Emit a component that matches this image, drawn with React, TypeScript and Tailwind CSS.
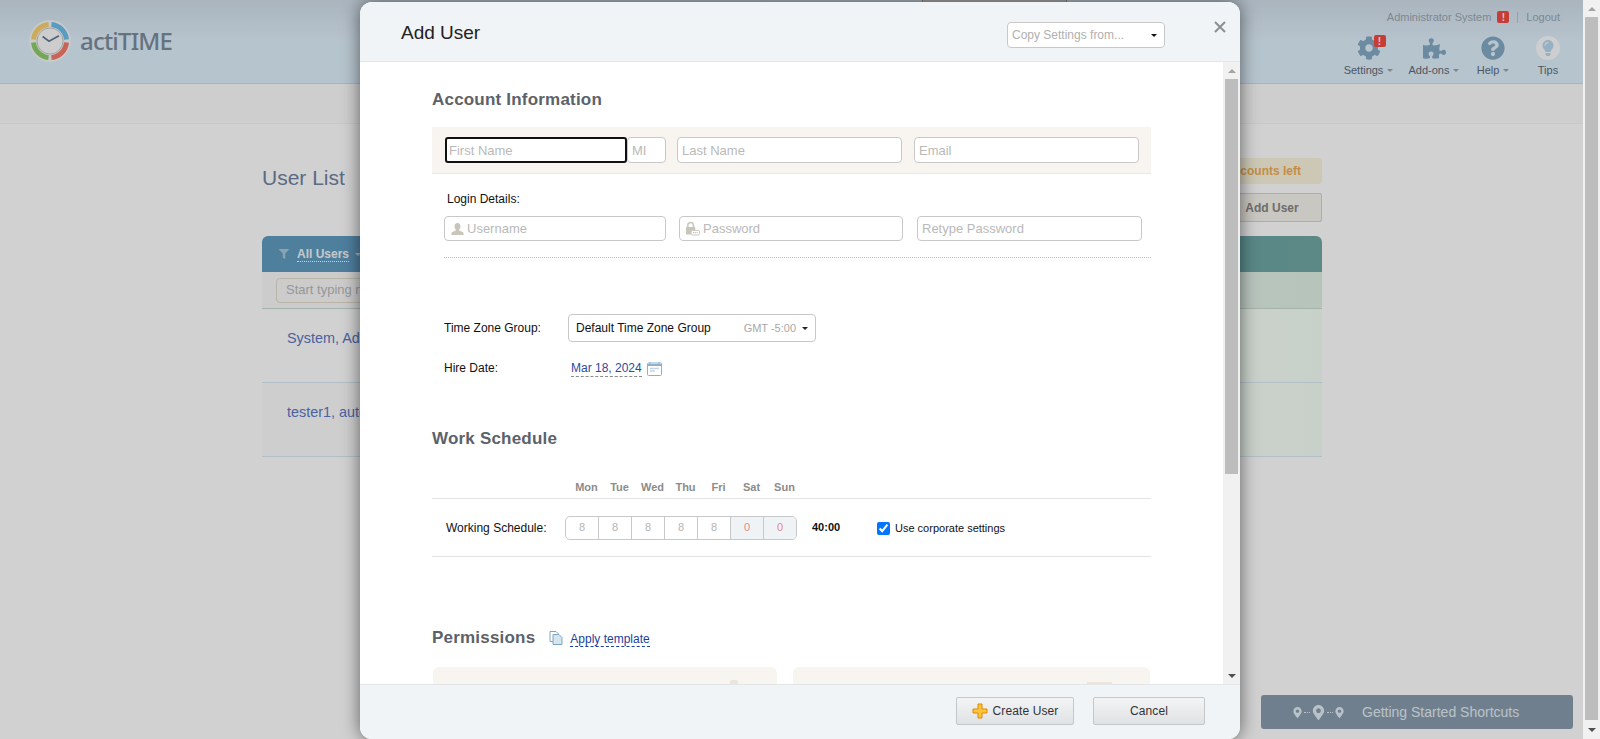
import { useState } from 'react'
import { FaCog, FaPuzzlePiece, FaQuestionCircle, FaLightbulb, FaFilter, FaMapMarkerAlt } from 'react-icons/fa'

const days = ['Mon', 'Tue', 'Wed', 'Thu', 'Fri', 'Sat', 'Sun']
const hours = ['8', '8', '8', '8', '8', '0', '0']

const navItems = [
  { label: 'Settings', width: 'w-[63px]', caret: true },
  { label: 'Add-ons', width: 'w-[68px]', caret: true },
  { label: 'Help', width: 'w-[50px]', caret: true },
  { label: 'Tips', width: 'w-[60px]', caret: false },
]

function Caret({ className }: { className: string }) {
  return <span className={`inline-block h-0 w-0 border-x-[3px] border-t-[3px] border-x-transparent ${className}`} />
}

function ArrowUp() {
  return <span className="h-0 w-0 border-x-[4px] border-b-[4px] border-x-transparent border-b-[#a3a3a3]" />
}

function ArrowDown() {
  return <span className="h-0 w-0 border-x-[4px] border-t-[4px] border-x-transparent border-t-[#505050]" />
}

function Logo() {
  return (
    <svg width="42" height="42" viewBox="0 0 42 42" fill="none">
      <circle cx="21" cy="21" r="21" fill="#f4f6f8" />
      <g strokeWidth="5">
        <path d="M22.44 4.6A16.5 16.5 0 0 1 37.44 19.56" stroke="#6cc0ec" />
        <path d="M37.44 22.44A16.5 16.5 0 0 1 22.44 37.44" stroke="#f47a6c" />
        <path d="M19.56 37.44A16.5 16.5 0 0 1 4.56 22.44" stroke="#8cce6c" />
        <path d="M4.56 19.56A16.5 16.5 0 0 1 19.56 4.56" stroke="#f8d272" />
      </g>
      <circle cx="21" cy="21" r="13" fill="#fbfbfb" stroke="#c9c9c9" />
      <path d="M13.6 16.6L20 21.3L30 15.7" stroke="#667a96" strokeWidth="1.8" />
    </svg>
  )
}

function UserIcon() {
  return (
    <svg className="ml-[6px] shrink-0" width="13" height="12" viewBox="0 0 13 12" fill="#c9c5ba">
      <path d="M6.5 0C8.4 0 9.5 1.4 9.5 3.2 9.5 5 8.6 6 8.2 6.6 8 7.3 8.4 7.8 9.2 8.1 11 8.7 12.6 9.3 12.6 10.5V12H.4V10.5C.4 9.3 2 8.7 3.8 8.1 4.6 7.8 5 7.3 4.8 6.6 4.4 6 3.5 5 3.5 3.2 3.5 1.4 4.6 0 6.5 0z" />
    </svg>
  )
}

function LockIcon() {
  return (
    <svg className="ml-[5px] shrink-0" width="15" height="15" viewBox="0 0 16 15" fill="none">
      <path d="M3 6V4a3 3 0 0 1 6 0v2" stroke="#c9c5ba" strokeWidth="1.6" />
      <rect x="1" y="6" width="10" height="8" rx="1" fill="#c9c5ba" />
      <rect x="6.5" y="9.5" width="9" height="5" rx="1.5" fill="#fff" stroke="#c9c5ba" />
      <path d="M8.5 12h1M10.5 12h1M12.5 12h1" stroke="#9c9c9c" />
    </svg>
  )
}

function TopBar() {
  return (
    <div className="relative flex h-[84px] justify-between border-b border-[#cddcea] bg-gradient-to-b from-[#d0dde8] via-[#dfeffb] to-[#e0f0fd]">
      <div className="absolute left-[922px] top-0 h-[8px] w-[145px] border-x border-[#9b9b9b] bg-[#c8c8c8]" />
      <div className="flex items-center pb-[1px] pl-[29px]">
        <Logo />
        <span className="ml-[9px] font-['Noto_Sans',sans-serif] text-[24px] font-medium leading-none tracking-[-0.8px] text-[#7c8c9c]">actiTIME</span>
      </div>
      <div className="flex flex-col items-end pr-[5px] pt-[10px]">
        <div className="flex h-[14px] items-center pr-[18px] text-[11px] text-[#9aa6b3]">
          <span>Administrator System</span>
          <span className="ml-[6px] flex h-[12px] w-[12px] items-center justify-center rounded-[2px] bg-[#f54a43] text-[10px] font-bold text-white">!</span>
          <span className="mx-[8px] h-[11px] w-px bg-[#b7c4d0]" />
          <span>Logout</span>
        </div>
        <div className="mt-[11px] flex">
          {navItems.map((item) => (
            <div key={item.label} className={`flex flex-col items-center ${item.width}`}>
              <div className="relative flex h-[26px] w-[26px] items-center justify-center">
                {item.label === 'Settings' && (
                  <>
                    <FaCog className="text-[24px] text-[#84a9c4]" />
                    <span className="absolute right-[-4px] top-[0px] flex h-[12px] w-[12px] items-center justify-center rounded-[2px] bg-[#f54a43] text-[10px] font-bold text-white">!</span>
                  </>
                )}
                {item.label === 'Add-ons' && <FaPuzzlePiece className="text-[23px] text-[#84a9c4]" />}
                {item.label === 'Help' && <FaQuestionCircle className="text-[24px] text-[#84a9c4]" />}
                {item.label === 'Tips' && (
                  <span className="flex h-[24px] w-[24px] items-center justify-center rounded-full bg-[#fafcfd]">
                    <FaLightbulb className="text-[16px] text-[#b8d8ee]" />
                  </span>
                )}
              </div>
              <div className="mt-[2px] flex h-[14px] items-center gap-[4px] text-[11px] text-[#5d6a78]">
                {item.label}
                {item.caret && <Caret className="border-t-[#97a4b0]" />}
              </div>
            </div>
          ))}
        </div>
      </div>
    </div>
  )
}

function UserListPage() {
  return (
    <div className="h-[739px] bg-white">
      <TopBar />
      <div className="h-[40px] border-b border-[#f5f5f5] bg-[#fcfcfc]" />
      <div className="pl-[262px] pr-[261px]">
        <div className="flex h-[112px] justify-between">
          <div className="pt-[42px] text-[21px] leading-[24px] text-[#6f83a1]">User List</div>
          <div className="flex flex-col items-end pt-[34px]">
            <div className="flex h-[26px] items-center rounded-[4px] bg-[#fbf5df] pl-[16px] pr-[21px] text-[12px] font-bold text-[#f0ad52]">5 accounts left</div>
            <div className="mt-[9px] flex h-[29px] w-[122px] items-center justify-center rounded-[2px] border border-[#d6d4c8] bg-[#f4f3ed] pl-[22px] text-[12px] font-bold text-[#8a8580]">Add User</div>
          </div>
        </div>
        <div className="flex h-[36px] items-center rounded-t-[6px] bg-[linear-gradient(90deg,#609bc0_0%,#609bc0_50%,#70a8a2_100%)] pl-[17px]">
          <FaFilter className="text-[10px] text-[#a9c6d8]" />
          <span className="ml-[8px] border-b border-dotted border-white text-[12px] font-bold leading-[14px] text-[#f0f5f8]">All Users</span>
          <Caret className="ml-[6px] border-t-[#c6dbe8]" />
        </div>
        <div className="flex h-[37px] items-center border-b border-[#c8dcd0] bg-[linear-gradient(90deg,#f9f9f9_0%,#f5f6f4_50%,#def0e5_100%)] pl-[14px]">
          <div className="flex h-[25px] w-[200px] items-center rounded-[4px] border border-[#e3dccb] pl-[9px] text-[13px] text-[#b8b8b8]">Start typing name</div>
        </div>
        <div className="flex h-[74px] border-b border-[#dbe9f2] bg-[linear-gradient(90deg,#ffffff_0%,#ffffff_60%,#f5fff6_100%)] pl-[25px] pt-[20px] text-[14.4px] leading-[18px] text-[#5a78c3]">System, Administrator</div>
        <div className="flex h-[74px] border-b border-[#dbe9f2] bg-[linear-gradient(90deg,#fcfcfc_0%,#fcfcfc_60%,#f5fff6_100%)] pl-[25px] pt-[20px] text-[14.4px] leading-[18px] text-[#5a78c3]">tester1, autotest</div>
      </div>
    </div>
  )
}

function ShortcutsWidget() {
  return (
    <div className="absolute left-[1261px] top-[695px] flex h-[34px] w-[312px] items-center rounded-[3px] bg-[#899cad] pl-[31px] text-[14px] text-[#e2edf5]">
      <FaMapMarkerAlt className="text-[11px]" />
      <span className="mx-[1px] w-[6px] border-t border-dotted border-[#e2edf5]" />
      <FaMapMarkerAlt className="text-[15px]" />
      <span className="mx-[1px] w-[6px] border-t border-dotted border-[#e2edf5]" />
      <FaMapMarkerAlt className="text-[11px]" />
      <span className="ml-[17px]">Getting Started Shortcuts</span>
    </div>
  )
}

function Field({ placeholder, width, focused, height = 'h-[26px]', icon }: { placeholder: string; width: string; focused?: boolean; height?: string; icon?: React.ReactNode }) {
  return (
    <div className={`flex items-center bg-white ${width} ${height} ${focused ? 'relative z-10 rounded-[3px] border-2 border-[#101010]' : 'rounded-[4px] border border-[#c8c8c8]'}`}>
      {icon}
      <input
        readOnly
        placeholder={placeholder}
        className={`h-full min-w-0 flex-1 bg-transparent text-[13px] outline-none placeholder:text-[#b9b9b9] ${focused ? 'pl-[2px]' : icon ? 'pl-[3px]' : 'pl-[4px]'}`}
      />
    </div>
  )
}

function SectionTitle({ children }: { children: string }) {
  return <h2 className="h-[20px] text-[17px] font-bold leading-[20px] tracking-[0.2px] text-[#5c626a]">{children}</h2>
}

function AccountSection() {
  return (
    <>
      <SectionTitle>Account Information</SectionTitle>
      <div className="mt-[17px] flex h-[47px] border-b border-[#e8e8e8] bg-[#f8f5f0] pl-[13px] pt-[10px]">
        <Field placeholder="First Name" width="w-[182px]" focused />
        <Field placeholder="MI" width="w-[39px]" />
        <div className="w-[11px]" />
        <Field placeholder="Last Name" width="w-[225px]" />
        <div className="w-[12px]" />
        <Field placeholder="Email" width="w-[225px]" />
      </div>
      <div className="mt-[18px] pl-[15px] text-[12px] leading-[14px] text-[#111]">Login Details:</div>
      <div className="mt-[10px] flex pl-[12px]">
        <Field placeholder="Username" width="w-[222px]" height="h-[25px]" icon={<UserIcon />} />
        <div className="w-[13px]" />
        <Field placeholder="Password" width="w-[224px]" height="h-[25px]" icon={<LockIcon />} />
        <div className="w-[14px]" />
        <Field placeholder="Retype Password" width="w-[225px]" height="h-[25px]" />
      </div>
      <div className="ml-[12px] mt-[16px] border-b border-dotted border-[#bdbdbd]" />
      <div className="mt-[56px] flex items-center pl-[12px] text-[12px] text-[#111]">
        <span className="w-[124px]">Time Zone Group:</span>
        <div className="flex h-[28px] w-[248px] items-center rounded-[4px] border border-[#c8c8c8] pl-[7px] pr-[7px]">
          <span className="flex-1">Default Time Zone Group</span>
          <span className="text-[11px] text-[#a8a8a8]">GMT -5:00</span>
          <Caret className="ml-[6px] border-t-[#222]" />
        </div>
      </div>
      <div className="mt-[16px] flex h-[20px] items-center pl-[12px] text-[12px]">
        <span className="w-[127px] text-[#111]">Hire Date:</span>
        <span className="mt-[2px] border-b border-dashed border-[#8b8b8b] leading-[15px] text-[#2c4aa0]">Mar 18, 2024</span>
        <svg className="ml-[5px] mt-[1px]" width="15" height="15" viewBox="0 0 15 15" fill="none">
          <rect x="0.5" y="2" width="14" height="12.5" rx="1" stroke="#8fb0c8" />
          <path d="M1 3h13v2H1z" fill="#8fb0c8" />
          <path d="M3 1v2M12 1v2" stroke="#8fb0c8" />
          <path d="M3 7.5h9M3 10h5" stroke="#c5d6e2" strokeWidth="1.5" />
        </svg>
      </div>
    </>
  )
}

function ScheduleSection() {
  const [useCorporate, setUseCorporate] = useState(true)
  return (
    <>
      <div className="mt-[51px]">
        <SectionTitle>Work Schedule</SectionTitle>
      </div>
      <div className="mt-[31px] flex h-[19px] border-b border-[#e4e4e4] pl-[138px]">
        {days.map((d) => (
          <span key={d} className="w-[33px] text-center text-[11px] font-bold leading-[14px] text-[#8c8c8c]">{d}</span>
        ))}
      </div>
      <div className="flex h-[58px] items-center border-b border-[#e4e4e4] pl-[14px] text-[12px] text-[#111]">
        <span className="w-[119px]">Working Schedule:</span>
        <div className="flex h-[24px] w-[232px] overflow-hidden rounded-[5px] border border-[#c8c8c8]">
          {hours.map((h, i) => (
            <span
              key={i}
              className={`flex flex-1 items-center justify-center border-[#c8c8c8] text-[11px] ${i > 0 ? 'border-l' : ''} ${i > 4 ? 'bg-[#f0f3f6] text-[#e08a8a]' : 'text-[#b5b5b5]'}`}
            >
              {h}
            </span>
          ))}
        </div>
        <span className="ml-[15px] w-[65px] text-[11px] font-bold">40:00</span>
        <input
          type="checkbox"
          checked={useCorporate}
          onChange={(e) => setUseCorporate(e.target.checked)}
          className="m-0 mt-[2px] h-[13px] w-[13px] accent-[#0075ff]"
        />
        <span className="ml-[5px] mt-[2px] text-[11px]">Use corporate settings</span>
      </div>
    </>
  )
}

function PermissionsSection() {
  return (
    <>
      <div className="mt-[71px] flex h-[20px] items-center">
        <SectionTitle>Permissions</SectionTitle>
        <svg className="ml-[14px]" width="14" height="14" viewBox="0 0 14 14" fill="none">
          <path d="M1 .5h6l2 2v8H1z" fill="#fff" stroke="#7ea6c2" />
          <path d="M4 3.5h6l3 3v7H4z" fill="#d6e4ee" stroke="#7ea6c2" />
        </svg>
        <span className="ml-[7px] mt-[2px] border-b border-dashed border-[#1b3f9a] text-[12px] leading-[14px] text-[#1b3f9a]">Apply template</span>
      </div>
      <div className="ml-[1px] mt-[19px] flex gap-[16px]">
        <div className="flex h-[40px] w-[344px] justify-end rounded-t-[6px] bg-[#f8f5f0] pr-[39px] pt-[13px]">
          <div className="h-[8px] w-[8px] rounded-[2px] bg-[#ece6d9]" />
        </div>
        <div className="flex h-[40px] w-[357px] justify-end rounded-t-[6px] bg-[#f8f5f0] pr-[38px] pt-[15px]">
          <div className="h-[8px] w-[25px] bg-[#ece6d9]" />
        </div>
      </div>
    </>
  )
}

function AddUserModal() {
  return (
    <div className="flex h-[737px] w-[880px] flex-col overflow-hidden rounded-[12px] bg-white shadow-[0_0_18px_rgba(0,0,0,0.55)]">
      <div className="flex h-[60px] shrink-0 items-center border-b border-[#e3e6e8] bg-[#f0f4f7] pl-[41px] pt-[3px]">
        <h1 className="flex-1 text-[19px] text-[#222]">Add User</h1>
        <div className="mt-[4px] flex h-[26px] w-[158px] items-center justify-between rounded-[4px] border border-[#c8c8c8] bg-white pl-[4px] pr-[7px] text-[12px] text-[#b0b0b0]">
          Copy Settings from...
          <Caret className="border-t-[#111]" />
        </div>
        <svg className="mb-[12px] ml-[49px] mr-[14px]" width="12" height="12" viewBox="0 0 12 12" stroke="#8a8f94" strokeWidth="2" fill="none">
          <path d="M1 1l10 10M11 1L1 11" />
        </svg>
      </div>
      <div className="flex min-h-0 flex-1">
        <div className="min-w-0 flex-1 overflow-hidden pl-[72px] pr-[72px] pt-[28px]">
          <AccountSection />
          <ScheduleSection />
          <PermissionsSection />
        </div>
        <div className="flex w-[17px] shrink-0 flex-col items-center bg-[#f1f1f1]">
          <div className="flex h-[17px] shrink-0 items-center justify-center"><ArrowUp /></div>
          <div className="h-[395px] w-[13px] shrink-0 bg-[#bdbdbd]" />
          <div className="flex-1" />
          <div className="flex h-[17px] shrink-0 items-center justify-center"><ArrowDown /></div>
        </div>
      </div>
      <div className="flex h-[55px] shrink-0 justify-end gap-[19px] border-t border-[#e3e6e8] bg-[#f0f4f7] pr-[35px] pt-[12px]">
        <button className="flex h-[28px] w-[118px] items-center justify-center gap-[5px] rounded-[2px] border border-[#c4c7c9] bg-gradient-to-b from-[#f3f4f5] to-[#dfe2e4] text-[12px] tracking-[0.1px] text-[#333]">
          <svg width="16" height="16" viewBox="0 0 16 16">
            <path d="M6 1h4v5h5v4h-5v5H6v-5H1V6h5z" fill="#fdc33a" stroke="#e08a00" />
          </svg>
          Create User
        </button>
        <button className="flex h-[28px] w-[112px] items-center justify-center rounded-[2px] border border-[#c4c7c9] bg-gradient-to-b from-[#f3f4f5] to-[#dfe2e4] text-[12px] tracking-[0.1px] text-[#333]">
          Cancel
        </button>
      </div>
    </div>
  )
}

export default function App() {
  return (
    <div className="flex h-[739px] overflow-hidden font-['Liberation_Sans',Arial,sans-serif]">
      <div className="relative min-w-0 flex-1">
        <UserListPage />
        <ShortcutsWidget />
        <div className="absolute inset-0 bg-black/[0.18] pl-[360px] pt-[2px]">
          <AddUserModal />
        </div>
      </div>
      <div className="flex w-[17px] shrink-0 flex-col items-center bg-[#f1f1f1]">
        <div className="flex h-[17px] shrink-0 items-center justify-center"><ArrowUp /></div>
        <div className="w-[13px] flex-1 bg-[#bdbdbd]" />
        <div className="flex h-[19px] shrink-0 items-center justify-center"><ArrowDown /></div>
      </div>
    </div>
  )
}
